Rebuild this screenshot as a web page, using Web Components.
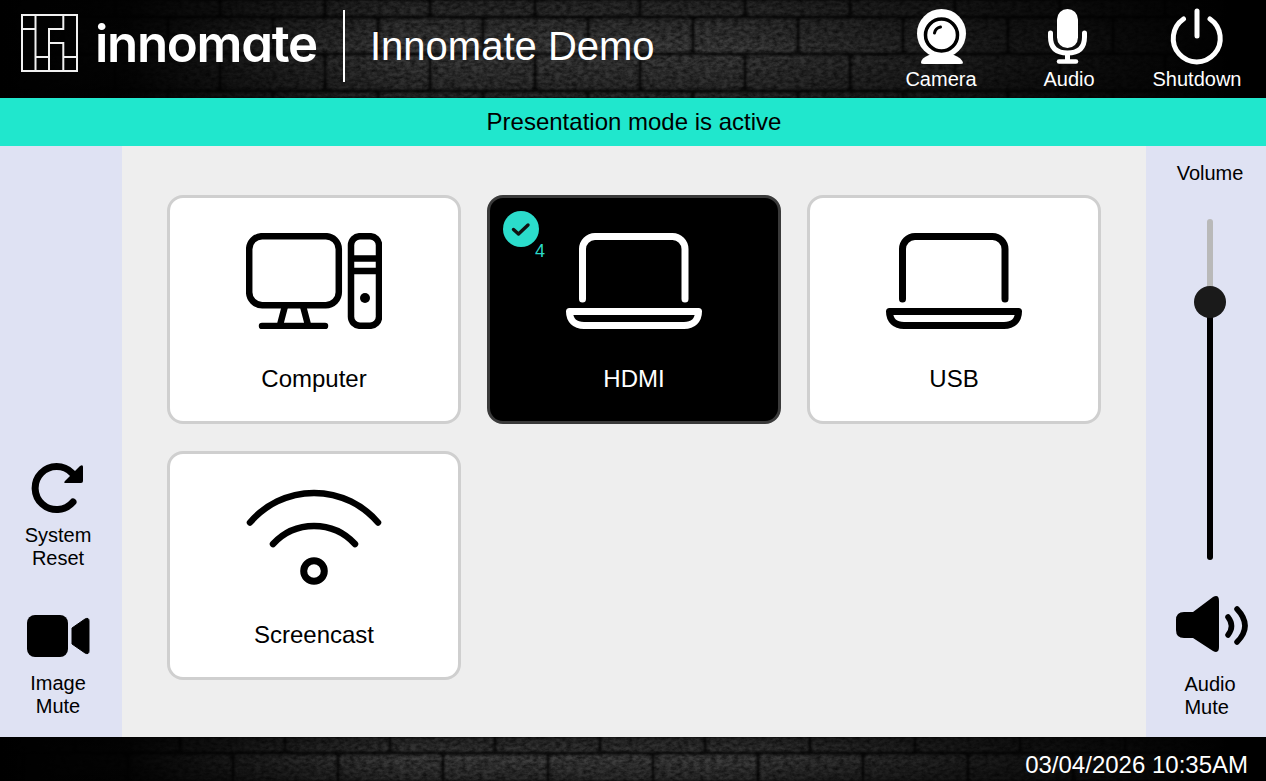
<!DOCTYPE html>
<html lang="en">
<head>
<meta charset="utf-8">
<title>Innomate Demo</title>
<style>
    html, body { margin: 0; height: 100%; background: #eee; }
    body { font-family: "Liberation Sans", Arial, sans-serif; color: #000; overflow: hidden; }
</style>
</head>
<body>
<room-panel>
    <top-bar slot="top" title="Innomate Demo">
        <top-action label="Camera">
            <svg viewBox="0 0 60 60" fill="#fff">
                <path d="M10 57 Q10 52 18 49 L43 49 Q51 52 52 57 Q52 58 49 58 H13 Q10 58 10 57Z"/>
                <circle cx="30.5" cy="27.5" r="24.5"/>
                <circle cx="30.5" cy="29" r="16" fill="none" stroke="#000" stroke-width="3.5"/>
                <path d="M23.500 27 Q24.500 22 29.500 21" fill="none" stroke="#000" stroke-width="3" stroke-linecap="round"/>
            </svg>
        </top-action>
        <top-action label="Audio">
            <svg viewBox="0 0 60 60">
                <rect x="18" y="3" width="21" height="39" rx="10.5" fill="#fff"/>
                <path d="M11.5 27 V31 Q11.5 47 28.5 47 Q45.500 47 45.500 31 V27" fill="none" stroke="#fff" stroke-width="5" stroke-linecap="round"/>
                <path d="M28.500 47 V55" stroke="#fff" stroke-width="5"/>
                <path d="M20 55.500 H37" stroke="#fff" stroke-width="4.500" stroke-linecap="round"/>
            </svg>
        </top-action>
        <top-action label="Shutdown">
            <svg viewBox="0 0 60 60" fill="none" stroke="#fff" stroke-width="5" stroke-linecap="round">
                <path d="M30 5 V30"/>
                <path d="M16.500 13 A23.500 23.500 0 1 0 43 13"/>
            </svg>
        </top-action>
    </top-bar>

    <status-banner slot="banner">Presentation mode is active</status-banner>

    <side-rail slot="left">
        <rail-button>
            <svg viewBox="0 0 64 56">
                <path d="M47 40 A21.500 21.500 0 1 1 46 11" fill="none" stroke="#000" stroke-width="7" stroke-linecap="round"/>
                <path d="M57 5 V19 Q57 21 55 21 H40 Q37 21 39 19 L54 4 Q57 2 57 5Z" fill="#000"/>
            </svg>
            System<br>Reset
        </rail-button>
        <rail-button>
            <svg viewBox="0 0 64 56" fill="#000">
                <rect x="1" y="5" width="41" height="42" rx="8"/>
                <path d="M46 18 L59 9 Q63 7 63 11 V41 Q63 45 59 43 L46 34Z" stroke="#000" stroke-linejoin="round"/>
            </svg>
            Image<br>Mute
        </rail-button>
    </side-rail>

    <source-grid slot="main">
        <source-tile label="Computer">
            <svg viewBox="0 0 136 96" fill="none" stroke="currentColor" stroke-width="6.500" stroke-linecap="round">
                <rect x="3.200" y="3.200" width="89.600" height="69" rx="13"/>
                <path d="M39 73 L34 92 M57 73 L62 92 M16 93 H79"/>
                <rect x="105" y="3.200" width="28" height="89.600" rx="9"/>
                <path d="M105 25.500 H133 M105 38 H133" stroke-linecap="butt"/>
                <circle cx="119" cy="65" r="5" fill="currentColor" stroke="none"/>
            </svg>
        </source-tile>
        <source-tile label="HDMI" selected count="4">
            <svg viewBox="0 0 136 96" fill="none" stroke="currentColor" stroke-width="7" stroke-linecap="round">
                <path d="M16.500 66 V16 A12.500 12.500 0 0 1 29 3.500 H106.500 A12.500 12.500 0 0 1 119 16 V66"/>
                <path d="M3.500 78.500 H132.500 C132.500 87 127 92.500 118 92.500 H18 C9 92.500 3.500 87 3.500 78.500Z" stroke-linejoin="round"/>
            </svg>
        </source-tile>
        <source-tile label="USB">
            <svg viewBox="0 0 136 96" fill="none" stroke="currentColor" stroke-width="7" stroke-linecap="round">
                <path d="M16.500 66 V16 A12.500 12.500 0 0 1 29 3.500 H106.500 A12.500 12.500 0 0 1 119 16 V66"/>
                <path d="M3.500 78.500 H132.500 C132.500 87 127 92.500 118 92.500 H18 C9 92.500 3.500 87 3.500 78.500Z" stroke-linejoin="round"/>
            </svg>
        </source-tile>
        <source-tile label="Screencast">
            <svg viewBox="0 0 136 96" fill="none" stroke="currentColor" stroke-width="6.500" stroke-linecap="round">
                <path d="M4 33.500 A84 84 0 0 1 132 33.500"/>
                <path d="M27 55 A55.700 55.700 0 0 1 109 55"/>
                <circle cx="68" cy="82" r="10.300" stroke-width="7"/>
            </svg>
        </source-tile>
    </source-grid>

    <volume-rail slot="right" level="75.7"></volume-rail>

    <bottom-bar slot="bottom">03/04/2026 10:35AM</bottom-bar>
</room-panel>

<script>
class BrickWall extends HTMLElement {
    connectedCallback() {
        this.attachShadow({ mode: 'open' }).innerHTML = `
            <style>
                :host { display: block; position: absolute; inset: 0; overflow: hidden; background: #000; }
                svg { display: block; width: 100%; height: 100%; }
            </style>
            <svg>
                <defs>
                    <pattern id="bricks" width="210" height="74" patternUnits="userSpaceOnUse" x="${this.getAttribute('shift-x') || 10}" y="${this.getAttribute('shift-y') || -20}">
                        <rect width="210" height="74" fill="#141414"/>
                        <g fill="#585858">
                            <rect x="2" y="2" width="101" height="33" rx="3"/>
                            <rect x="107" y="2" width="101" height="33" rx="3"/>
                            <rect x="-50" y="39" width="101" height="33" rx="3"/>
                            <rect x="55" y="39" width="101" height="33" rx="3"/>
                            <rect x="160" y="39" width="101" height="33" rx="3"/>
                        </g>
                    </pattern>
                    <filter id="soft" x="0" y="0" width="100%" height="100%">
                        <feGaussianBlur stdDeviation="1.200"/>
                    </filter>
                    <filter id="grit" x="0" y="0" width="100%" height="100%">
                        <feTurbulence type="fractalNoise" baseFrequency="0.18 0.3" numOctaves="4" seed="4"/>
                        <feColorMatrix values="0 0 0 0 0  0 0 0 0 0  0 0 0 0 0  1.1 0 0 0 -0.3"/>
                    </filter>
                    <linearGradient id="fade">
                        <stop offset="0" stop-color="#000" stop-opacity="1"/>
                        <stop offset=".1" stop-color="#000" stop-opacity=".95"/>
                        <stop offset=".32" stop-color="#000" stop-opacity=".28"/>
                        <stop offset=".58" stop-color="#000" stop-opacity=".28"/>
                        <stop offset=".8" stop-color="#000" stop-opacity=".72"/>
                        <stop offset=".97" stop-color="#000" stop-opacity="1"/>
                    </linearGradient>
                    <linearGradient id="shade" x2="0" y2="1">
                        <stop offset="0" stop-color="#000" stop-opacity=".4"/>
                        <stop offset=".5" stop-color="#000" stop-opacity="0"/>
                        <stop offset="1" stop-color="#000" stop-opacity=".35"/>
                    </linearGradient>
                </defs>
                <rect width="100%" height="100%" fill="url(#bricks)" filter="url(#soft)"/>
                <rect width="100%" height="100%" filter="url(#grit)"/>
                <rect width="100%" height="100%" fill="url(#fade)"/>
                <rect width="100%" height="100%" fill="url(#shade)"/>
            </svg>`;
    }
}

class TopBar extends HTMLElement {
    connectedCallback() {
        this.attachShadow({ mode: 'open' }).innerHTML = `
            <style>
                :host { display: block; position: relative; height: 98px; color: #fff; }
                .row { position: relative; display: flex; align-items: flex-start; height: 100%; }
                .logo { width: 58px; height: 59px; margin: 13px 0 0 20px; flex: none; }
                .brand {
                    font: 600 51px/88px Inter, "Liberation Sans", sans-serif;
                    font-feature-settings: "cv11";
                    letter-spacing: -1.3px;
                    margin-left: 17px;
                    width: 248px;
                    white-space: nowrap;
                }
                .divider { width: 2px; height: 72px; margin-top: 10px; background: #fff; flex: none; }
                .title { font-size: 40px; line-height: 93px; margin-left: 25px; white-space: nowrap; }
                .actions { display: flex; margin-left: auto; margin-right: 5px; }
            </style>
            <brick-wall></brick-wall>
            <div class="row">
                <svg class="logo" viewBox="0 0 58 59" fill="none" stroke="#f1f1f1" stroke-width="2">
                    <rect x="2" y="2" width="55" height="56"/>
                    <path d="M2 16 H15.500 M15.500 2 V58 M43.300 2 V16 H29 V58 M29 30 H43.300 V58 M15.500 44 H29 M43.300 44 H57"/>
                </svg>
                <div class="brand">innomate</div>
                <div class="divider"></div>
                <div class="title">${this.getAttribute('title')}</div>
                <div class="actions"><slot></slot></div>
            </div>`;
    }
}

class TopAction extends HTMLElement {
    connectedCallback() {
        this.attachShadow({ mode: 'open' }).innerHTML = `
            <style>
                :host { display: flex; flex-direction: column; align-items: center; width: 128px; padding-top: 6px; }
                ::slotted(svg) { width: 60px; height: 60px; display: block; }
                span { font-size: 20px; line-height: 23px; margin-top: 2px; }
            </style>
            <slot></slot>
            <span>${this.getAttribute('label')}</span>`;
    }
}

class StatusBanner extends HTMLElement {
    constructor() {
        super();
        this.attachShadow({ mode: 'open' }).innerHTML = `
            <style>
                :host { display: block; height: 48px; box-sizing: border-box; padding-left: 2px; background: #20e7cd; text-align: center; font-size: 24px; line-height: 48px; color: #000; }
            </style>
            <slot></slot>`;
    }
}

class SideRail extends HTMLElement {
    constructor() {
        super();
        this.attachShadow({ mode: 'open' }).innerHTML = `
            <style>
                :host { display: flex; flex-direction: column; justify-content: flex-end; gap: 40px; background: #dfe2f3; padding: 0 6px 19px 0; box-sizing: border-box; height: 100%; }
            </style>
            <slot></slot>`;
    }
}

class RailButton extends HTMLElement {
    constructor() {
        super();
        this.attachShadow({ mode: 'open' }).innerHTML = `
            <style>
                :host { display: block; text-align: center; font-size: 20px; line-height: 23px; }
                ::slotted(svg) { display: block; width: 64px; height: 56px; margin: 0 auto 6px; }
            </style>
            <slot></slot>`;
    }
}

class SourceGrid extends HTMLElement {
    constructor() {
        super();
        this.attachShadow({ mode: 'open' }).innerHTML = `
            <style>
                :host {
                    display: grid;
                    grid-template-columns: repeat(3, 294px);
                    grid-auto-rows: 229px;
                    gap: 27px 26px;
                    align-content: start;
                    padding: 49px 0 0 45px;
                    box-sizing: border-box;
                    height: 100%;
                    background: #eee;
                }
            </style>
            <slot></slot>`;
    }
}

class SourceTile extends HTMLElement {
    connectedCallback() {
        const selected = this.hasAttribute('selected');
        const count = this.getAttribute('count');
        this.attachShadow({ mode: 'open' }).innerHTML = `
            <style>
                :host {
                    display: flex;
                    flex-direction: column;
                    align-items: center;
                    position: relative;
                    box-sizing: border-box;
                    padding-top: 35px;
                    border: 3px solid ${selected ? '#3a3a3a' : '#cfcfcf'};
                    border-radius: 16px;
                    background: ${selected ? '#000' : '#fff'};
                    color: ${selected ? '#fff' : '#000'};
                }
                ::slotted(svg) { display: block; width: 136px; height: 96px; }
                .label { font-size: 24px; line-height: 28px; margin-top: 36px; }
                .check { position: absolute; left: 13px; top: 13px; width: 36px; height: 36px; }
                .count { position: absolute; left: 45px; top: 43px; font-size: 18px; line-height: 20px; color: #2bd9c8; }
            </style>
            ${selected ? `
                <svg class="check" viewBox="0 0 36 36">
                    <circle cx="18" cy="18" r="18" fill="#2bdccb"/>
                    <path d="M10.500 18.500 L15.500 23 L25 14" fill="none" stroke="#111" stroke-width="3.400" stroke-linecap="round" stroke-linejoin="round"/>
                </svg>
                <span class="count">${count}</span>` : ''}
            <slot></slot>
            <div class="label">${this.getAttribute('label')}</div>`;
    }
}

class VolumeRail extends HTMLElement {
    connectedCallback() {
        const level = Number(this.getAttribute('level'));
        const pos = Math.round(341 * (100 - level) / 100);
        this.attachShadow({ mode: 'open' }).innerHTML = `
            <style>
                :host { display: flex; flex-direction: column; align-items: center; height: 100%; box-sizing: border-box; padding: 16px 0 0 8px; background: #dfe2f3; font-size: 20px; line-height: 23px; }
                .track {
                    position: relative;
                    width: 6.500px;
                    height: 341px;
                    margin-top: 34px;
                    border-radius: 4px;
                    background: linear-gradient(#b9b9b9 ${pos}px, #000 ${pos}px);
                }
                .thumb { position: absolute; left: 50%; top: ${pos}px; width: 32px; height: 32px; margin: -16px 0 0 -16px; border-radius: 50%; background: #1a1a1a; }
                svg { display: block; width: 76px; height: 64px; margin-top: 34px; }
                .mute { margin-top: 15px; align-self: center; text-align: left; }
            </style>
            <div>Volume</div>
            <div class="track"><div class="thumb"></div></div>
            <svg viewBox="0 0 76 64">
                <path d="M12 18 H21 L41 3 Q47 0 47 7 V53 Q47 60 41 57 L21 44 H12 Q4 44 4 36 V26 Q4 18 12 18Z"/>
                <path d="M56 23 Q63 32 56 41 M65 15 Q81 32 65 48" fill="none" stroke="#000" stroke-width="5.500" stroke-linecap="round"/>
            </svg>
            <div class="mute">Audio<br>Mute</div>`;
    }
}

class BottomBar extends HTMLElement {
    connectedCallback() {
        this.attachShadow({ mode: 'open' }).innerHTML = `
            <style>
                :host { display: block; position: relative; height: 44px; color: #fff; font-size: 24px; }
                .row { position: relative; display: flex; justify-content: flex-end; padding: 14px 18px 0 0; line-height: 28px; }
            </style>
            <brick-wall shift-x="-30" shift-y="-21"></brick-wall>
            <div class="row"><slot></slot></div>`;
    }
}

class RoomPanel extends HTMLElement {
    constructor() {
        super();
        this.attachShadow({ mode: 'open' }).innerHTML = `
            <style>
                :host {
                    display: grid;
                    grid-template-columns: 122px 1fr 120px;
                    grid-template-rows: 98px 48px 591px 44px;
                    height: 781px;
                }
                .top, .banner, .bottom { grid-column: 1 / -1; }
            </style>
            <div class="top"><slot name="top"></slot></div>
            <div class="banner"><slot name="banner"></slot></div>
            <div><slot name="left"></slot></div>
            <div><slot name="main"></slot></div>
            <div><slot name="right"></slot></div>
            <div class="bottom"><slot name="bottom"></slot></div>`;
    }
}

customElements.define('brick-wall', BrickWall);
customElements.define('top-bar', TopBar);
customElements.define('top-action', TopAction);
customElements.define('status-banner', StatusBanner);
customElements.define('side-rail', SideRail);
customElements.define('rail-button', RailButton);
customElements.define('source-grid', SourceGrid);
customElements.define('source-tile', SourceTile);
customElements.define('volume-rail', VolumeRail);
customElements.define('bottom-bar', BottomBar);
customElements.define('room-panel', RoomPanel);
</script>
</body>
</html>
